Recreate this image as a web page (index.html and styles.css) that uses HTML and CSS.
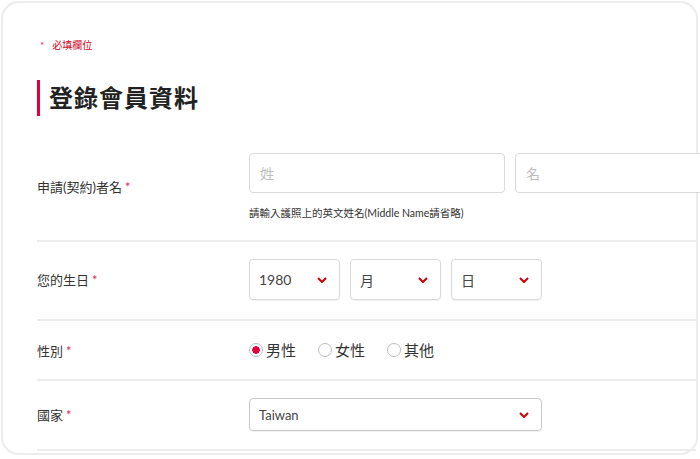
FILE: index.html
```html
<!DOCTYPE html>
<html>
<head>
    <title>登錄會員資料</title>
    <link rel="stylesheet" href="styles.css">
</head>
<body>
    <div class="card">
        <p class="required-note"><span class="star">*</span>必填欄位</p>

        <h1 class="section-title">登錄會員資料</h1>

        <form class="member-form">
            <!-- Name -->
            <div class="form-row name-row">
                <label class="form-label">申請(契約)者名<span class="star">*</span></label>
                <div class="form-field">
                    <div class="name-inputs">
                        <input type="text" placeholder="姓">
                        <input type="text" placeholder="名">
                    </div>
                    <p class="hint">請輸入護照上的英文姓名(Middle Name請省略)</p>
                </div>
            </div>

            <!-- Birthday -->
            <div class="form-row birthday-row">
                <label class="form-label">您的生日<span class="star">*</span></label>
                <div class="form-field date-selects">
                    <div class="select-box tall"><span>1980</span><svg class="chevron" viewBox="0 0 10 6"><path d="M1 1l4 4 4-4"/></svg></div>
                    <div class="select-box tall"><span>月</span><svg class="chevron" viewBox="0 0 10 6"><path d="M1 1l4 4 4-4"/></svg></div>
                    <div class="select-box tall"><span>日</span><svg class="chevron" viewBox="0 0 10 6"><path d="M1 1l4 4 4-4"/></svg></div>
                </div>
            </div>

            <!-- Gender -->
            <div class="form-row gender-row">
                <label class="form-label">性別<span class="star">*</span></label>
                <div class="form-field radio-group">
                    <label class="radio"><span class="dot checked"></span>男性</label>
                    <label class="radio"><span class="dot"></span>女性</label>
                    <label class="radio"><span class="dot"></span>其他</label>
                </div>
            </div>

            <!-- Country -->
            <div class="form-row country-row">
                <label class="form-label">國家<span class="star">*</span></label>
                <div class="form-field">
                    <div class="select-box country"><span>Taiwan</span><svg class="chevron" viewBox="0 0 10 6"><path d="M1 1l4 4 4-4"/></svg></div>
                </div>
            </div>
        </form>
    </div>
</body>
</html>
```

FILE: styles.css
```css
body {
    margin: 0;
    padding: 0;
    background-color: #fff;
    font-family: 'Lato', 'Noto Sans CJK TC', sans-serif;
    color: #333;
    overflow: hidden;
}

.card {
    box-sizing: border-box;
    width: 697px;
    height: 454px;
    margin: 1px 0 0 1px;
    padding: 35px 0 0 34px;
    border: 2px solid #ececec;
    border-radius: 18px;
    background-color: #fff;
}

.required-note {
    margin: 0;
    font-size: 10px;
    line-height: 14px;
    color: #d0021b;
}

.required-note .star {
    margin-right: 8px;
}

.section-title {
    margin: 28px 0 17px 0;
    padding-left: 9px;
    border-left: 3px solid #e4003a;
    font-size: 24px;
    line-height: 36px;
    font-weight: 700;
    color: #222;
    letter-spacing: 1px;
}

.form-row {
    display: flex;
    align-items: center;
    padding: 20px 0;
    border-bottom: 2px solid #ececec;
}

.form-label {
    width: 212px;
    flex-shrink: 0;
    font-size: 13px;
    color: #333;
}

.star {
    color: #e0245e;
    margin-left: 3px;
}

.form-field {
    flex: 1;
}

/* the second name box runs past the card edge, as in the design */
.name-inputs {
    display: grid;
    grid-template-columns: 256px 256px;
    gap: 10px;
}

.name-inputs input {
    box-sizing: border-box;
    height: 40px;
    padding: 0 10px;
    border: 1px solid #d9d9d9;
    border-radius: 4px;
    font-family: inherit;
    font-size: 14px;
    color: #333;
}

.name-inputs input::placeholder {
    color: #bdbdbd;
}

.hint {
    margin: 13px 0 0 0;
    font-size: 10.5px;
    line-height: 14px;
    color: #333;
}

.date-selects {
    display: flex;
    gap: 10px;
}

.select-box {
    box-sizing: border-box;
    display: flex;
    align-items: center;
    justify-content: space-between;
    padding: 0 12px 0 9px;
    border: 1px solid #d9d9d9;
    border-radius: 4px;
    box-shadow: 0 1px 1px rgba(0, 0, 0, 0.06);
    font-size: 14px;
    color: #444;
}

.select-box.tall {
    width: 91px;
    height: 41px;
}

.select-box.country {
    width: 293px;
    height: 33px;
    border-color: #c8c8c8;
    font-size: 13px;
}

.chevron {
    width: 10px;
    height: 6px;
    fill: none;
    stroke: #cc0000;
    stroke-width: 2;
}

.birthday-row {
    padding: 17px 0 19px 0;
}

.gender-row {
    padding: 19px 0 19px 0;
}

.radio-group {
    display: flex;
    gap: 22px;
}

.radio {
    display: flex;
    align-items: center;
    gap: 3px;
    font-size: 15px;
    line-height: 20px;
    color: #333;
}

.dot {
    box-sizing: border-box;
    width: 14px;
    height: 14px;
    border: 1px solid #bdbdbd;
    border-radius: 50%;
}

.dot.checked {
    background: radial-gradient(circle, #e4003a 0, #e4003a 3.5px, #fff 4px);
}

.country-row {
    padding: 17px 0 18px 0;
}
```
